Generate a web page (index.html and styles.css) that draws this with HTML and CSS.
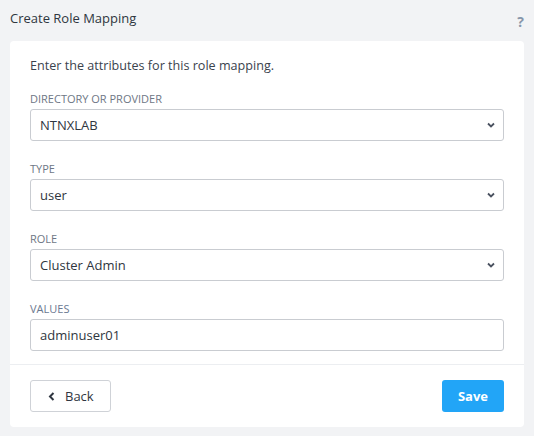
FILE: index.html
```html
<!DOCTYPE html>
<html>
<head>
<meta charset="utf-8">
<link rel="stylesheet" href="styles.css">
</head>
<body>
<div class="page">
  <header class="header">
    <span class="title">Create Role Mapping</span>
    <span class="help">?</span>
  </header>
  <section class="card">
    <div class="body">
      <p class="intro">Enter the attributes for this role mapping.</p>
      <div class="field">
        <label class="label">DIRECTORY OR PROVIDER</label>
        <div class="select"><span>NTNXLAB</span><svg class="chev" width="8" height="6" viewBox="0 0 8 6"><path d="M1 1.5 L4 4.5 L7 1.5" fill="none" stroke="#4a5260" stroke-width="1.8"/></svg></div>
      </div>
      <div class="field">
        <label class="label">TYPE</label>
        <div class="select"><span>user</span><svg class="chev" width="8" height="6" viewBox="0 0 8 6"><path d="M1 1.5 L4 4.5 L7 1.5" fill="none" stroke="#4a5260" stroke-width="1.8"/></svg></div>
      </div>
      <div class="field">
        <label class="label">ROLE</label>
        <div class="select"><span>Cluster Admin</span><svg class="chev" width="8" height="6" viewBox="0 0 8 6"><path d="M1 1.5 L4 4.5 L7 1.5" fill="none" stroke="#4a5260" stroke-width="1.8"/></svg></div>
      </div>
      <div class="field">
        <label class="label">VALUES</label>
        <div class="select"><span>adminuser01</span></div>
      </div>
    </div>
    <footer class="footer">
      <button class="btn back"><svg width="8" height="9" viewBox="0 0 8 9"><path d="M5.5 1 L2 4.5 L5.5 8" fill="none" stroke="#2f3640" stroke-width="2"/></svg><span>Back</span></button>
      <button class="btn save">Save</button>
    </footer>
  </section>
</div>
</body>
</html>
```
FILE: styles.css
```css
* { box-sizing: border-box; }
html, body { margin: 0; padding: 0; }
body {
  background: #f2f3f5;
  font-family: "Open Sans", "Liberation Sans", sans-serif;
  color: #323a45;
  width: 534px;
  height: 436px;
  overflow: hidden;
}
.page { padding: 0 10px; }
.header {
  height: 41px;
  display: flex;
  align-items: center;
  justify-content: space-between;
  padding-bottom: 6px;
}
.title { font-size: 13px; color: #2f3640; }
.help { font-size: 14px; font-weight: 700; color: #8796aa; padding-top: 8px; padding-right: 0; }
.card {
  background: #ffffff;
  border-radius: 4px;
  height: 386px;
  display: flex;
  flex-direction: column;
}
.body {
  padding: 15px 20px 13px;
  border-bottom: 1px solid #eceef1;
}
.intro { margin: 0 0 16px; font-size: 12.6px; color: #3a424d; line-height: 20px; }
.field { margin-bottom: 21px; }
.field:last-child { margin-bottom: 0; }
.label {
  display: block;
  font-size: 11px;
  color: #6e7785;
  line-height: 14px;
  margin-bottom: 3px;
}
.field:nth-child(5) .label { color: #6a7890; }
.select {
  height: 32px;
  border: 1px solid #c9ccd1;
  border-radius: 3px;
  display: flex;
  align-items: center;
  justify-content: space-between;
  padding: 0 8px 0 9px;
  font-size: 13px;
  color: #2f3640;
}
.chev { display: block; }
.footer {
  display: flex;
  justify-content: space-between;
  padding: 15px 20px;
}
.btn {
  height: 32px;
  border-radius: 3px;
  font-family: inherit;
  font-size: 13px;
  display: flex;
  align-items: center;
  cursor: pointer;
}
.back {
  width: 81px;
  background: #fff;
  border: 1px solid #cfd2d7;
  color: #2f3640;
  padding: 0 0 0 17px;
  gap: 9px;
}
.back svg { display: block; }
.save {
  width: 62px;
  background: #22a5f7;
  border: none;
  color: #fff;
  font-weight: 700;
  justify-content: center;
}
```
